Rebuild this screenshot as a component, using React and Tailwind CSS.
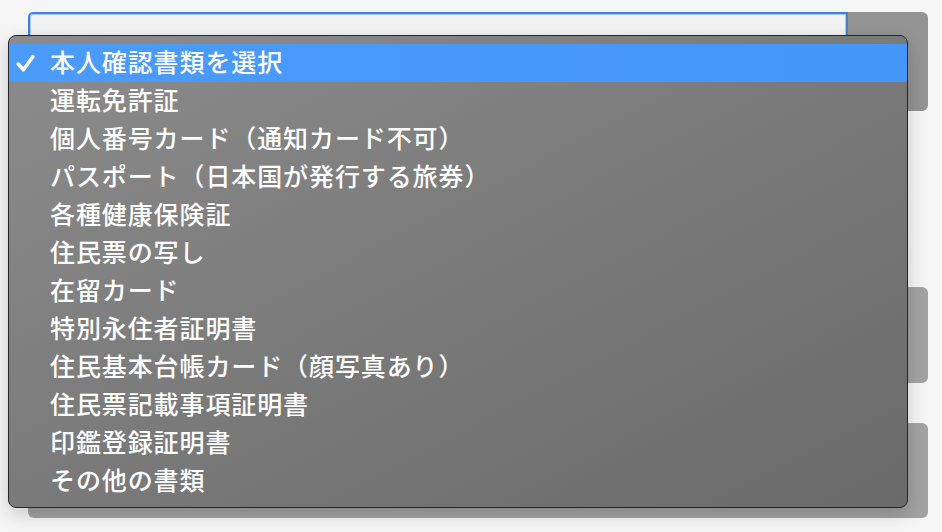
const options = [
  "本人確認書類を選択",
  "運転免許証",
  "個人番号カード（通知カード不可）",
  "パスポート（日本国が発行する旅券）",
  "各種健康保険証",
  "住民票の写し",
  "在留カード",
  "特別永住者証明書",
  "住民基本台帳カード（顔写真あり）",
  "住民票記載事項証明書",
  "印鑑登録証明書",
  "その他の書類",
];

function Check() {
  return (
    <svg width="21" height="21" viewBox="0 0 20 20" className="shrink-0">
      <path
        d="M3 10.5 L8 16 L17 3.5"
        fill="none"
        stroke="white"
        strokeWidth="3.4"
        strokeLinecap="round"
        strokeLinejoin="round"
      />
    </svg>
  );
}

export default function App() {
  return (
    <div
      className="relative w-[942px] h-[532px] overflow-hidden bg-[#f5f5f5]"
      style={{ fontFamily: '"Noto Sans CJK JP", "Noto Sans", sans-serif' }}
    >
      {/* page behind the menu */}
      <div className="ml-[28px] w-[900px] pt-[12px] flex flex-col">
        <div className="flex h-[99px]">
          <div className="flex-1 rounded-l-[5px] border-2 border-[#3f82de] bg-[#f2f2f2] shadow-[inset_0_0_0_1px_#a9c8f2]" />
          <div className="w-[80px] rounded-r-[6px] bg-[#949494]" />
        </div>
        <div className="mt-[176px] h-[96px] rounded-[6px] bg-[#a2a2a2]" />
        <div className="mt-[40px] h-[95px] rounded-[6px] bg-[#a2a2a2]" />
      </div>

      {/* open select menu */}
      <div className="absolute left-[8px] top-[35px] w-[900px] h-[473px] rounded-[8px] border border-[#262626] bg-gradient-to-br from-[#8c8c8c] via-[#7a7a7a] to-[#6a6a6a] py-[8px] shadow-[0_6px_18px_rgba(0,0,0,0.18)] overflow-hidden">
        {options.map((label, i) => (
          <div
            key={label}
            className={
              i === 0
                ? "flex items-center h-[38px] bg-gradient-to-r from-[#4a9bfa] to-[#4496f9] text-white"
                : "flex items-center h-[38px] text-white"
            }
          >
            <div className="w-[41px] pl-[6px] flex items-center">
              {i === 0 && <Check />}
            </div>
            <span className="pb-[3px] text-[25px] leading-none font-medium tracking-[0.9px]">
              {label}
            </span>
          </div>
        ))}
      </div>
    </div>
  );
}
